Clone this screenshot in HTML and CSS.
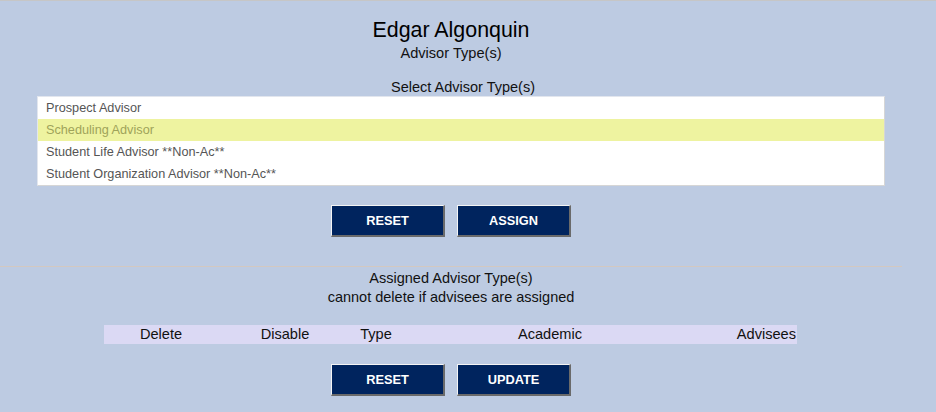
FILE: index.html
```html
<!DOCTYPE html>
<html>
<head>
<meta charset="utf-8">
<link rel="stylesheet" href="styles.css">
</head>
<body>
<div class="page">
  <div class="header">
    <div class="title">Edgar Algonquin</div>
    <div class="subtitle">Advisor Type(s)</div>
  </div>
  <div class="select-block">
    <div class="select-label">Select Advisor Type(s)</div>
    <div class="listbox">
      <div class="option">Prospect Advisor</div>
      <div class="option selected">Scheduling Advisor</div>
      <div class="option">Student Life Advisor **Non-Ac**</div>
      <div class="option">Student Organization Advisor **Non-Ac**</div>
    </div>
  </div>
  <div class="buttons first">
    <button class="btn">RESET</button>
    <button class="btn">ASSIGN</button>
  </div>
  <div class="rule"></div>
  <div class="assigned">
    <div class="line">Assigned Advisor Type(s)</div>
    <div class="line">cannot delete if advisees are assigned</div>
  </div>
  <div class="table-head">
    <div class="col c1">Delete</div>
    <div class="col c2">Disable</div>
    <div class="col c3">Type</div>
    <div class="col c4">Academic</div>
    <div class="col c5">Advisees</div>
  </div>
  <div class="buttons second">
    <button class="btn">RESET</button>
    <button class="btn">UPDATE</button>
  </div>
</div>
</body>
</html>
```

FILE: styles.css
```css
html, body {
  margin: 0;
  padding: 0;
}
body {
  background: #bdcbe2;
  border-top: 1px solid #c6c6c6;
  font-family: "Liberation Sans", Arial, sans-serif;
  color: #111;
  height: 411px;
  overflow: hidden;
}
.page {
  width: 902px;
  display: flex;
  flex-direction: column;
}
.header {
  text-align: center;
  padding-top: 17px;
}
.title {
  font-size: 21.4px;
  line-height: 24px;
  color: #000;
}
.subtitle {
  font-size: 14.6px;
  line-height: 18px;
  margin-top: 2px;
}
.select-block {
  margin-left: 37px;
  width: 848px;
  margin-top: 17px;
}
.select-label {
  text-align: center;
  font-size: 14.5px;
  line-height: 17px;
  padding-left: 4px;
}
.listbox {
  background: #fff;
  border: 1px solid #d6d6d6;
  border-left-color: #e2e6ee;
  border-top-color: #e2e6ee;
}
.option {
  height: 22px;
  line-height: 22px;
  font-size: 12.7px;
  color: #555;
  padding-left: 8px;
}
.option.selected {
  background: #eef3a0;
  color: #9fa35a;
}
.buttons {
  display: flex;
  justify-content: center;
  gap: 12px;
}
.buttons.first {
  margin-top: 19px;
}
.buttons.second {
  margin-top: 20px;
}
.btn {
  width: 114px;
  height: 32px;
  background: #00245e;
  color: #fff;
  font-family: "Liberation Sans", Arial, sans-serif;
  font-weight: bold;
  font-size: 12.8px;
  border-style: solid;
  border-width: 1px 2px 2px 1px;
  border-color: #f4f4f4 #6a6a6a #6a6a6a #f4f4f4;
  padding: 0;
  margin: 0;
}
.rule {
  height: 1px;
  background: #d3c8c0;
  margin-top: 29px;
}
.assigned {
  text-align: center;
  margin-top: 2px;
}
.line {
  font-size: 14.5px;
  line-height: 19px;
}
.table-head {
  margin-left: 104px;
  width: 693px;
  height: 19px;
  margin-top: 18px;
  background: #dbd9f4;
  display: grid;
  grid-template-columns: 114px 134px 48px 300px 97px;
  font-size: 14.6px;
  line-height: 19px;
}
.col {
  text-align: center;
}
.c5 {
  text-align: right;
  padding-right: 1px;
}
```
